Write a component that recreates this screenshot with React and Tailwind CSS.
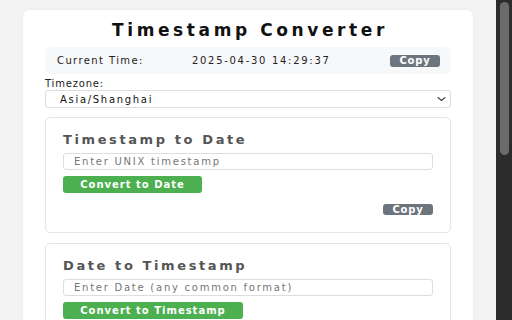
import React from 'react';

const font = { fontFamily: '"DejaVu Sans", "Liberation Sans", sans-serif' };

const CopyButton = ({ height = 'h-[12px]' }) => (
  <button
    type="button"
    className={`w-[50px] ${height} rounded-[3px] bg-[#6c757d] text-white text-[10px] font-bold leading-none tracking-[0.8px] flex items-center justify-center`}
  >
    Copy
  </button>
);

const Section = ({ title, placeholder, action, buttonWidth, showCopy }) => (
  <div className="border border-[#e6e6e6] rounded-[5px] bg-white px-[17px] pt-[14px] pb-[17px]">
    <h3 className="h-[16px] leading-[16px] text-[13px] font-bold text-[#555555] tracking-[2.6px]">
      {title}
    </h3>
    <div className="mt-[5px] h-[17px] border border-[#dddddd] rounded-[3px] bg-white pl-[10px] flex items-center">
      <span className="text-[10px] text-[#767676] tracking-[1.75px] leading-none">{placeholder}</span>
    </div>
    <button
      type="button"
      className={`mt-[6px] h-[17px] rounded-[3px] bg-[#4caf50] text-white text-[10px] font-bold tracking-[1px] flex items-center justify-center ${buttonWidth}`}
    >
      {action}
    </button>
    {showCopy && (
      <div className="mt-[11px] flex justify-end">
        <CopyButton height="h-[11px]" />
      </div>
    )}
  </div>
);

export default function App() {
  return (
    <div className="h-[320px] w-[512px] overflow-hidden bg-[#f3f3f3] flex" style={font}>
      <div className="flex-1 pl-[23px] pt-[10px]">
        <div className="w-[450px] h-[400px] bg-white rounded-[6px] shadow-[0_0_3px_rgba(0,0,0,0.06)] px-[22px] pt-[9px]">
          <h1 className="h-[22px] leading-[22px] text-center text-[17px] font-bold text-[#111111] tracking-[3.6px] pl-[4px]">
            Timestamp Converter
          </h1>

          <div className="mt-[6px] h-[27px] rounded-[5px] bg-[#f7f8fa] pl-[12px] pr-[11px] flex items-center">
            <span className="w-[135px] text-[10px] text-[#222222] tracking-[1.4px]">Current Time:</span>
            <span className="text-[10px] text-[#222222] tracking-[1.7px]">2025-04-30 14:29:37</span>
            <div className="ml-auto">
              <CopyButton />
            </div>
          </div>

          <div className="mt-[4px] h-[12px] leading-[12px] text-[10px] text-[#222222] tracking-[0.8px]">
            Timezone:
          </div>
          <div className="h-[18px] border border-[#dddddd] rounded-[3px] bg-white pl-[14px] pr-[4px] flex items-center">
            <span className="text-[10px] text-[#111111] tracking-[1.7px]">Asia/Shanghai</span>
            <svg className="ml-auto" width="9" height="6" viewBox="0 0 9 6" fill="none">
              <path d="M1 1.5 L4.5 4.5 L8 1.5" stroke="#444" strokeWidth="1.1" strokeLinecap="round" strokeLinejoin="round" />
            </svg>
          </div>

          <div className="mt-[9px] flex flex-col gap-[10px]">
            <Section
              title="Timestamp to Date"
              placeholder="Enter UNIX timestamp"
              action="Convert to Date"
              buttonWidth="w-[139px]"
              showCopy
            />
            <Section
              title="Date to Timestamp"
              placeholder="Enter Date (any common format)"
              action="Convert to Timestamp"
              buttonWidth="w-[180px]"
            />
          </div>
        </div>
      </div>
      <div className="w-[16px] h-full bg-[#2c2c2c] pt-[2px] flex justify-center">
        <div className="w-[9px] h-[153px] rounded-full bg-[#6b6b6b]" />
      </div>
    </div>
  );
}
